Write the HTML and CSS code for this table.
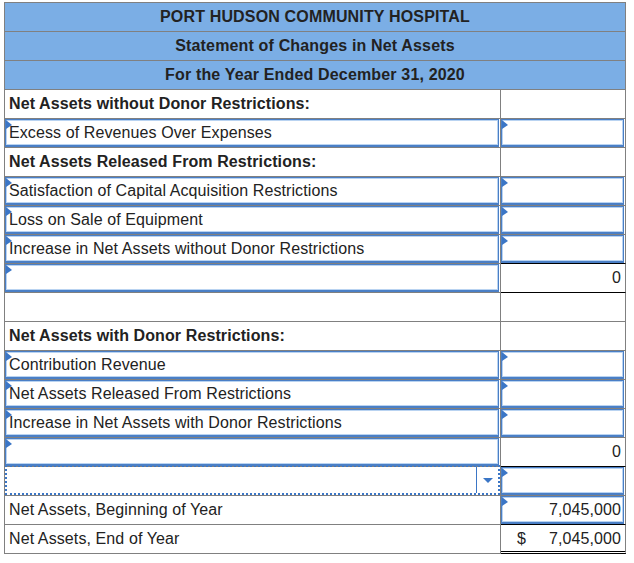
FILE: index.html
```html
<!DOCTYPE html>
<html lang="en">
<head>
<meta charset="utf-8">
<title>Statement of Changes in Net Assets</title>
<link rel="stylesheet" href="styles.css">
</head>
<body>
<table class="sheet">
  <colgroup><col class="c-label"><col class="c-value"></colgroup>
  <tr class="head"><td colspan="2">PORT HUDSON COMMUNITY HOSPITAL</td></tr>
  <tr class="head"><td colspan="2">Statement of Changes in Net Assets</td></tr>
  <tr class="head"><td colspan="2">For the Year Ended December 31, 2020</td></tr>

  <tr><td class="label bold">Net Assets without Donor Restrictions:</td><td class="val"></td></tr>
  <tr><td class="in"><div class="field"><span class="mark"></span>Excess of Revenues Over Expenses</div></td><td class="in"><div class="field num"><span class="mark"></span></div></td></tr>
  <tr><td class="label bold">Net Assets Released From Restrictions:</td><td class="val"></td></tr>
  <tr><td class="in"><div class="field"><span class="mark"></span>Satisfaction of Capital Acquisition Restrictions</div></td><td class="in"><div class="field num"><span class="mark"></span></div></td></tr>
  <tr><td class="in"><div class="field"><span class="mark"></span>Loss on Sale of Equipment</div></td><td class="in"><div class="field num"><span class="mark"></span></div></td></tr>
  <tr><td class="in"><div class="field"><span class="mark"></span>Increase in Net Assets without Donor Restrictions</div></td><td class="in rule"><div class="field num"><span class="mark"></span></div></td></tr>
  <tr><td class="in"><div class="field"><span class="mark"></span></div></td><td class="val rule">0</td></tr>
  <tr><td class="label"></td><td class="val"></td></tr>

  <tr><td class="label bold">Net Assets with Donor Restrictions:</td><td class="val"></td></tr>
  <tr><td class="in"><div class="field"><span class="mark"></span>Contribution Revenue</div></td><td class="in"><div class="field num"><span class="mark"></span></div></td></tr>
  <tr><td class="in"><div class="field"><span class="mark"></span>Net Assets Released From Restrictions</div></td><td class="in"><div class="field num"><span class="mark"></span></div></td></tr>
  <tr><td class="in"><div class="field"><span class="mark"></span>Increase in Net Assets with Donor Restrictions</div></td><td class="in"><div class="field num"><span class="mark"></span></div></td></tr>
  <tr><td class="in"><div class="field"><span class="mark"></span></div></td><td class="val rule">0</td></tr>
  <tr><td class="drop-cell"><div class="dropdown"><div class="dd-btn"><span class="dd-arrow"></span></div></div></td><td class="in"><div class="field num"><span class="mark"></span></div></td></tr>
  <tr><td class="label">Net Assets, Beginning of Year</td><td class="in rule"><div class="field num"><span class="mark"></span>7,045,000</div></td></tr>
  <tr><td class="label">Net Assets, End of Year</td><td class="val total"><div class="total-inner"><span>$</span><span>7,045,000</span></div></td></tr>
</table>
</body>
</html>
```

FILE: styles.css
```css
body {
  margin: 0;
  padding: 2px 0 0 4px;
  background: #ffffff;
  font-family: "Liberation Sans", Arial, sans-serif;
  font-size: 16px;
  letter-spacing: 0.1px;
  color: #222222;
}

.sheet {
  border-collapse: separate;
  border-spacing: 0;
  table-layout: fixed;
  width: 622px;
  border-top: 1px solid #808080;
  border-left: 1px solid #808080;
}

.c-label { width: 496px; }
.c-value { width: 125px; }

.sheet td {
  height: 28px;
  padding: 0 4px;
  border-right: 1px solid #808080;
  border-bottom: 1px solid #808080;
  vertical-align: middle;
  white-space: nowrap;
  overflow: visible;
}

.head td {
  background: #7baee5;
  text-align: center;
  font-weight: bold;
  letter-spacing: 0.16px;
}

.bold { font-weight: bold; }

.val { text-align: right; }

.sheet td.rule { border-bottom-color: #000000; }

.sheet td.in {
  padding: 0 1px 0 0;
}

.field {
  position: relative;
  height: 28px;
  box-sizing: border-box;
  border: 1px solid #4a7fc6;
  border-bottom: 2px solid #4a7fc6;
  box-shadow: inset 0 0 0 1px #b9d3f1;
  padding: 0 3px;
  display: flex;
  align-items: center;
}

.field.num {
  justify-content: flex-end;
  padding-right: 2px;
}

.mark {
  position: absolute;
  left: 0;
  top: 0;
  width: 0;
  height: 0;
  border-left: 6px solid #3b76c6;
  border-top: 5px solid transparent;
  border-bottom: 4px solid transparent;
}

.sheet td.drop-cell {
  padding: 0;
  vertical-align: top;
}

.dropdown {
  height: 30px;
  margin-top: -2px;
  box-sizing: border-box;
  border: 2px dotted #3b76c6;
  display: flex;
  justify-content: flex-end;
}

.dd-btn {
  width: 21px;
  border-left: 1px solid #3b76c6;
  display: flex;
  align-items: center;
  justify-content: center;
}

.dd-arrow {
  width: 0;
  height: 0;
  border-top: 5px solid #3b76c6;
  border-left: 5.5px solid transparent;
  border-right: 5.5px solid transparent;
  margin-top: 1px;
}

.sheet td.total {
  height: 26px;
  padding: 0 4px 0 16px;
  border-bottom: 3px double #000000;
}

.total-inner {
  display: flex;
  justify-content: space-between;
  margin-top: 1px;
}
```
